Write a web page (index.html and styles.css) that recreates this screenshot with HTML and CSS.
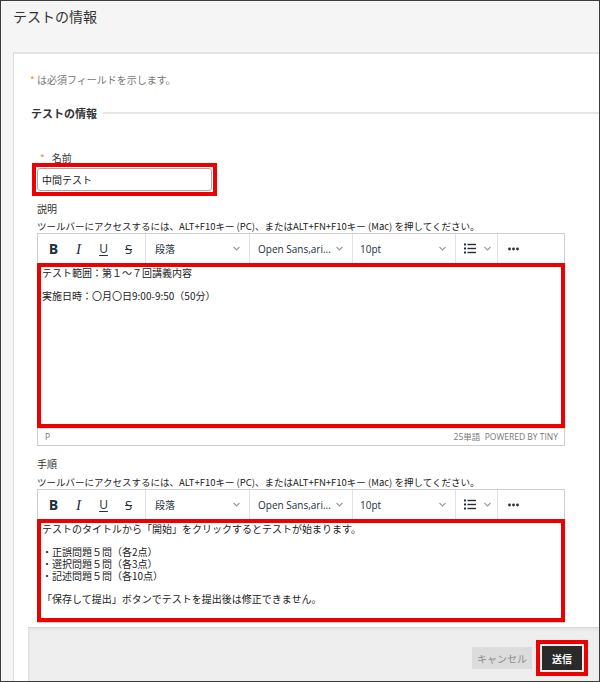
FILE: index.html
```html
<!DOCTYPE html>
<html lang="ja">
<head>
  <meta charset="UTF-8" />
  <title>テストの情報</title>
  <link rel="stylesheet" href="styles.css">
</head>
<body>

<div class="frame">

  <div class="page-head">
    <h1>テストの情報</h1>
  </div>

  <div class="panel">
    <div class="form-area">

      <p class="req-note"><span class="star">*</span> は必須フィールドを示します。</p>

      <div class="legend"><span>テストの情報</span></div>

      <div class="field-label req"><span class="star">*</span>名前</div>
      <div class="name-mark">
        <input class="name-input" type="text" value="中間テスト">
      </div>

      <div class="field-label">説明</div>
      <div class="help">ツールバーにアクセスするには、ALT+F10キー (PC)、またはALT+FN+F10キー (Mac) を押してください。</div>

      <div class="editor">
        <div class="toolbar">
          <div class="tb-group tb-format">
            <span class="tb-btn b">B</span>
            <span class="tb-btn i">I</span>
            <span class="tb-btn u">U</span>
            <span class="tb-btn s">S</span>
          </div>
          <div class="tb-group tb-select w-block">
            <span>段落</span>
            <svg class="chev" width="9" height="9" viewBox="0 0 9 9"><path d="M1.5 3l3 3 3-3" /></svg>
          </div>
          <div class="tb-group tb-select w-font">
            <span>Open Sans,ari...</span>
            <svg class="chev" width="9" height="9" viewBox="0 0 9 9"><path d="M1.5 3l3 3 3-3" /></svg>
          </div>
          <div class="tb-group tb-select w-size">
            <span>10pt</span>
            <svg class="chev" width="9" height="9" viewBox="0 0 9 9"><path d="M1.5 3l3 3 3-3" /></svg>
          </div>
          <div class="tb-group tb-list">
            <svg width="12" height="11" viewBox="0 0 12 11">
              <rect x="0" y="0.5" width="2" height="2" /><rect x="0" y="4.5" width="2" height="2" /><rect x="0" y="8.5" width="2" height="2" />
              <rect x="3.5" y="0.8" width="8.5" height="1.4" /><rect x="3.5" y="4.8" width="8.5" height="1.4" /><rect x="3.5" y="8.8" width="8.5" height="1.4" />
            </svg>
            <svg class="chev" width="9" height="9" viewBox="0 0 9 9"><path d="M1.5 3l3 3 3-3" /></svg>
          </div>
          <div class="tb-group tb-more">
            <svg width="11" height="4" viewBox="0 0 11 4"><circle cx="1.5" cy="2" r="1.4" /><circle cx="5.5" cy="2" r="1.4" /><circle cx="9.5" cy="2" r="1.4" /></svg>
          </div>
        </div>
        <div class="editor-body desc-body">
          <p>テスト範囲：第１～７回講義内容</p>
          <p>実施日時：〇月〇日9:00-9:50（50分）</p>
        </div>
        <div class="statusbar">
          <span>P</span>
          <span>25単語&nbsp;&nbsp;POWERED BY TINY</span>
        </div>
      </div>

      <div class="field-label steps-label">手順</div>
      <div class="help steps-help">ツールバーにアクセスするには、ALT+F10キー (PC)、またはALT+FN+F10キー (Mac) を押してください。</div>

      <div class="editor">
        <div class="toolbar">
          <div class="tb-group tb-format">
            <span class="tb-btn b">B</span>
            <span class="tb-btn i">I</span>
            <span class="tb-btn u">U</span>
            <span class="tb-btn s">S</span>
          </div>
          <div class="tb-group tb-select w-block">
            <span>段落</span>
            <svg class="chev" width="9" height="9" viewBox="0 0 9 9"><path d="M1.5 3l3 3 3-3" /></svg>
          </div>
          <div class="tb-group tb-select w-font">
            <span>Open Sans,ari...</span>
            <svg class="chev" width="9" height="9" viewBox="0 0 9 9"><path d="M1.5 3l3 3 3-3" /></svg>
          </div>
          <div class="tb-group tb-select w-size">
            <span>10pt</span>
            <svg class="chev" width="9" height="9" viewBox="0 0 9 9"><path d="M1.5 3l3 3 3-3" /></svg>
          </div>
          <div class="tb-group tb-list">
            <svg width="12" height="11" viewBox="0 0 12 11">
              <rect x="0" y="0.5" width="2" height="2" /><rect x="0" y="4.5" width="2" height="2" /><rect x="0" y="8.5" width="2" height="2" />
              <rect x="3.5" y="0.8" width="8.5" height="1.4" /><rect x="3.5" y="4.8" width="8.5" height="1.4" /><rect x="3.5" y="8.8" width="8.5" height="1.4" />
            </svg>
            <svg class="chev" width="9" height="9" viewBox="0 0 9 9"><path d="M1.5 3l3 3 3-3" /></svg>
          </div>
          <div class="tb-group tb-more">
            <svg width="11" height="4" viewBox="0 0 11 4"><circle cx="1.5" cy="2" r="1.4" /><circle cx="5.5" cy="2" r="1.4" /><circle cx="9.5" cy="2" r="1.4" /></svg>
          </div>
        </div>
        <div class="editor-body steps-body">
          <p>テストのタイトルから「開始」をクリックするとテストが始まります。</p>
          <p>・正誤問題５問（各2点）<br>・選択問題５問（各3点）<br>・記述問題５問（各10点）</p>
          <p>「保存して提出」ボタンでテストを提出後は修正できません。</p>
        </div>
      </div>

    </div>

    <div class="footer">
      <button class="btn-cancel">キャンセル</button>
      <div class="submit-mark">
        <button class="btn-submit">送信</button>
      </div>
    </div>
  </div>

</div>

</body>
</html>
```

FILE: styles.css
```css
* {
  box-sizing: border-box;
}

body {
  margin: 0;
  font-family: "Noto Sans CJK JP", sans-serif;
  color: #222;
}

.frame {
  width: 600px;
  height: 682px;
  border: 1px solid #3c3c3c;
  background: #f5f5f5;
  display: flex;
  flex-direction: column;
  overflow: hidden;
}

/* page title strip */
.page-head {
  flex: none;
  height: 51px;
  padding: 5px 0 0 12px;
}

.page-head h1 {
  margin: 0;
  font-size: 14px;
  line-height: 20px;
  font-weight: normal;
  color: #333;
}

.panel {
  flex: 1;
  min-height: 0;
  margin-left: 12px;
  background: #fff;
  border-top: 2px solid #e4e4e4;
  border-left: 1px solid #dcdcdc;
  display: flex;
  flex-direction: column;
}

.form-area {
  flex: 1;
  min-height: 0;
  overflow: hidden;
}

.star {
  color: #ec8a3c;
}

.req-note {
  margin: 19px 0 0 16px;
  font-size: 10px;
  line-height: 14px;
  color: #777;
}

/* fieldset legend with the rule running to the right */
.legend {
  display: flex;
  align-items: center;
  margin-top: 19px;
  padding-left: 17px;
  font-size: 11px;
  line-height: 14px;
  font-weight: bold;
  color: #333;
}

.legend::after {
  content: "";
  flex: 1;
  height: 2px;
  margin-left: 6px;
  background: #e6e6e6;
}

.field-label {
  margin-top: 7px;
  padding-left: 23px;
  font-size: 10px;
  line-height: 12px;
  color: #333;
}

.field-label.req {
  margin-top: 33px;
  padding-left: 26px;
  line-height: 10px;
  height: 10px;
}

.field-label.req .star {
  margin-right: 7px;
}

.name-mark {
  width: 185px;
  margin-left: 18px;
  border: 4px solid #ee0000;
  padding: 1px;
}

.name-input {
  display: block;
  width: 175px;
  height: 23px;
  border: 1px solid #a8a8a8;
  border-radius: 3px;
  padding: 0 4px;
  font-family: "Noto Sans CJK JP", sans-serif;
  font-size: 10px;
  color: #222;
}

.help {
  margin-top: 5px;
  padding-left: 23px;
  font-size: 9.5px;
  line-height: 12px;
  color: #222;
  white-space: nowrap;
}

.steps-label {
  margin-top: 12px;
}

.steps-help {
  margin-top: 6px;
}

/* rich text editor */
.editor {
  width: 528px;
  margin: 1px 0 0 23px;
  border: 1px solid #cfcfcf;
}

.toolbar {
  display: flex;
  height: 29px;
  color: #222f3e;
  font-family: "Open Sans", "Noto Sans CJK JP", sans-serif;
}

.tb-group {
  display: flex;
  align-items: center;
  border-right: 1px solid #e3e3e3;
}

.tb-format {
  width: 108px;
  padding-left: 3px;
}

.tb-btn {
  width: 25px;
  text-align: center;
  line-height: 16px;
}

.tb-btn.b {
  font-size: 14px;
  font-weight: bold;
}

.tb-btn.i {
  font-family: "Liberation Serif", serif;
  font-style: italic;
  font-size: 15px;
}

.tb-btn.u {
  font-size: 12px;
  text-decoration: underline;
  text-underline-offset: 2px;
}

.tb-btn.s {
  font-size: 13px;
  text-decoration: line-through;
}

.tb-select {
  justify-content: space-between;
  padding: 0 8px 0 9px;
  font-size: 10px;
}

.w-block {
  width: 104px;
}

.w-font {
  width: 103px;
  padding-left: 8px;
}

.w-size {
  width: 103px;
  padding-left: 7px;
}

.chev path {
  fill: none;
  stroke: #9a9a9a;
  stroke-width: 1.1;
}

.tb-list {
  width: 42px;
  padding-left: 8px;
  gap: 7px;
}

.tb-list rect,
.tb-more circle {
  fill: #222f3e;
}

.tb-more {
  width: 31px;
  justify-content: center;
  border-right: none;
}

.editor-body {
  margin: 0 -1px;
  border: 4px solid #ee0000;
  padding: 0 1px;
  font-size: 10px;
  line-height: 12px;
  color: #222;
}

.editor-body p {
  margin: 0 0 11px;
}

.desc-body {
  height: 165px;
}

.steps-body {
  height: 103px;
}

.statusbar {
  display: flex;
  justify-content: space-between;
  height: 17px;
  border-top: 1px solid #e0e0e0;
  padding: 0 6px 0 7px;
  font-family: "Open Sans", "Noto Sans CJK JP", sans-serif;
  font-size: 8.5px;
  line-height: 15px;
  color: #777;
}

/* sticky submit bar */
.footer {
  flex: none;
  height: 54px;
  margin-left: 14px;
  background: #eee;
  border-top: 1px solid #d6d6d6;
  border-left: 1px solid #e0e0e0;
  box-shadow: inset 0 2px 3px rgba(0, 0, 0, 0.04);
  display: flex;
  justify-content: flex-end;
  align-items: center;
  padding: 7px 11px 0 0;
}

.btn-cancel {
  width: 60px;
  height: 22px;
  margin-right: 4px;
  border: none;
  padding: 0;
  white-space: nowrap;
  background: #dcdcdc;
  color: #8c8c8c;
  font-family: "Noto Sans CJK JP", sans-serif;
  font-size: 10px;
}

.submit-mark {
  border: 4px solid #ee0000;
  padding: 2px;
}

.btn-submit {
  display: block;
  width: 40px;
  height: 24px;
  border: none;
  padding: 0;
  background: #2a2a2a;
  color: #fff;
  font-family: "Noto Sans CJK JP", sans-serif;
  font-size: 10px;
  font-weight: bold;
}
```
